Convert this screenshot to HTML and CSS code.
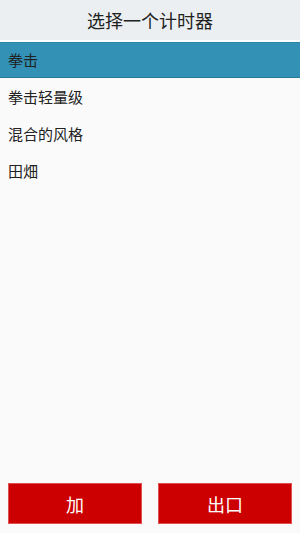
FILE: index.html
```html
<!DOCTYPE html>
<html lang="zh">
<head>
    <meta charset="UTF-8">
    <meta name="viewport" content="width=device-width, initial-scale=1.0">
    <title>选择一个计时器</title>
    <link rel="stylesheet" href="styles.css">
</head>
<body>
    <div class="app">
        <div class="header">选择一个计时器</div>
        <ul class="timer-list">
            <li class="timer selected">拳击</li>
            <li class="timer">拳击轻量级</li>
            <li class="timer">混合的风格</li>
            <li class="timer">田畑</li>
        </ul>
        <div class="footer">
            <button class="btn">加</button>
            <button class="btn">出口</button>
        </div>
    </div>
</body>
</html>
```

FILE: styles.css
```css
body {
    margin: 0;
    font-family: "Noto Sans CJK SC", "Noto Sans", sans-serif;
    background-color: #fafafa;
    color: #222;
}
.app {
    display: flex;
    flex-direction: column;
    height: 100vh;
}
.header {
    height: 40px;
    line-height: 40px;
    text-align: center;
    font-size: 18px;
    background-color: #eceff1;
    border-bottom: 2px solid #fff;
}
.timer-list {
    list-style: none;
    margin: 0;
    padding: 0;
    flex: 1;
}
.timer {
    height: 37px;
    line-height: 37px;
    padding-left: 8px;
    font-size: 15px;
}
.timer.selected {
    height: 36px;
    line-height: 34px;
    background-color: #3291b5;
    border-top: 1px solid #2b86a9;
    border-bottom: 1px solid #277a9a;
    box-sizing: border-box;
}
.footer {
    display: flex;
    gap: 16px;
    padding: 0 8px 9px;
}
.btn {
    flex: 1;
    height: 41px;
    font-family: inherit;
    font-size: 18px;
    color: #fff;
    background-color: #cc0000;
    border: 1px solid #e05050;
    cursor: pointer;
}
```
